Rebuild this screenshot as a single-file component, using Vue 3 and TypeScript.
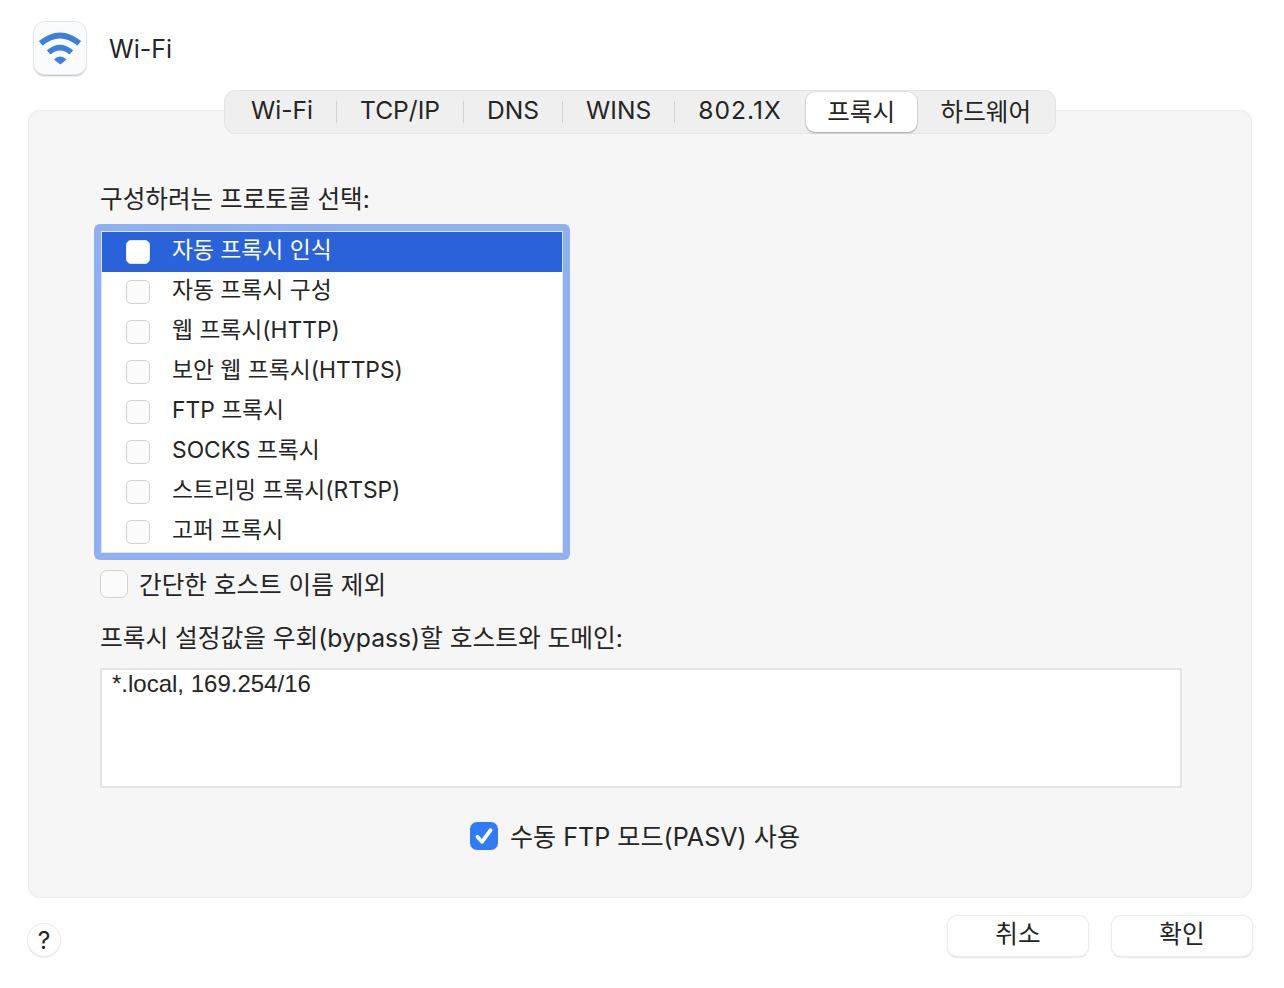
<script setup lang="ts">
const tabs = ['Wi-Fi', 'TCP/IP', 'DNS', 'WINS', '802.1X', '프록시', '하드웨어']
const activeTab = '프록시'

const protocols = [
  '자동 프록시 인식',
  '자동 프록시 구성',
  '웹 프록시(HTTP)',
  '보안 웹 프록시(HTTPS)',
  'FTP 프록시',
  'SOCKS 프록시',
  '스트리밍 프록시(RTSP)',
  '고퍼 프록시'
]
</script>

<template>
  <div class="window">
    <header class="title-row">
      <div class="app-icon">
        <svg width="52" height="52" viewBox="0 0 52 52">
          <path d="M6.8 21.4 Q26 5.6 45.2 21.4" class="arc" stroke-width="6" />
          <path d="M14.6 30.4 Q26 20.8 37.4 30.4" class="arc" stroke-width="5.6" />
          <path d="M20 37.6 Q26 31.6 32.6 37.6 L26.3 42.6 Z" fill="#3b7fe0" />
        </svg>
      </div>
      <h1 class="title">Wi-Fi</h1>
    </header>

    <nav class="tabs">
      <template v-for="(tab, i) in tabs" :key="tab">
        <span
          v-if="i > 0"
          class="sep"
          :class="{ hidden: tab === activeTab || tabs[i - 1] === activeTab }"
        ></span>
        <button class="tab" :class="{ active: tab === activeTab, numeric: tab === '802.1X' }">{{ tab }}</button>
      </template>
    </nav>

    <section class="panel">
      <p class="label">구성하려는 프로토콜 선택:</p>

      <div class="list-focus">
        <ul class="list">
          <li v-for="(item, i) in protocols" :key="item" class="row" :class="{ selected: i === 0 }">
            <span class="box small"></span>
            <span class="row-text">{{ item }}</span>
          </li>
        </ul>
      </div>

      <div class="exclude">
        <span class="box large"></span>
        <span class="exclude-text">간단한 호스트 이름 제외</span>
      </div>

      <p class="label bypass">프록시 설정값을 우회(bypass)할 호스트와 도메인:</p>
      <div class="hosts">*.local, 169.254/16</div>

      <div class="pasv">
        <span class="checked">
          <svg width="28" height="28" viewBox="0 0 28 28">
            <path d="M7.4 14.8 L12 19.8 L20.6 8.2" fill="none" stroke="#fff" stroke-width="3.8" stroke-linecap="round" stroke-linejoin="round" />
          </svg>
        </span>
        <span class="pasv-text">수동 FTP 모드(PASV) 사용</span>
      </div>
    </section>

    <footer class="footer">
      <button class="help">?</button>
      <div class="actions">
        <button class="btn">취소</button>
        <button class="btn">확인</button>
      </div>
    </footer>
  </div>
</template>

<style>
html, body {
  margin: 0;
  background: #fff;
}
</style>

<style scoped>
.window {
  width: 1284px;
  height: 988px;
  box-sizing: border-box;
  padding: 22px 32px 0 28px;
  font-family: Inter, "Noto Sans CJK KR", sans-serif;
  font-size: 24.6px;
  color: #252525;
  background: #fff;
  overflow: hidden;
}
.title-row {
  display: flex;
  align-items: center;
  height: 52px;
  padding-left: 6px;
  gap: 23px;
}
.app-icon {
  width: 52px;
  height: 52px;
  box-sizing: border-box;
  border-radius: 11px;
  background: #fafbfc;
  box-shadow: 0 0 0 1px #e6e6e6, 0 2px 2px rgba(0, 0, 0, 0.28);
}
.app-icon svg {
  display: block;
}
.arc {
  fill: none;
  stroke: #3b7fe0;
}
.title {
  margin: 2px 0 0;
  font-size: 25px;
  font-weight: 400;
}
.tabs {
  position: relative;
  z-index: 1;
  display: flex;
  align-items: center;
  width: 832px;
  height: 44px;
  box-sizing: border-box;
  margin: 16px 0 -24px 196px;
  padding: 0 26px;
  background: #efefef;
  border: 1px solid #e5e5e5;
  border-radius: 11px;
}
.tab {
  flex: none;
  height: 40px;
  padding: 0 23px 5px;
  border: none;
  border-radius: 9px;
  background: none;
  font: inherit;
  color: inherit;
}
.tabs .tab:first-of-type {
  padding-left: 0;
}
.tab.numeric {
  letter-spacing: 1px;
}
.tab.active {
  padding: 0 21.5px 5px;
  background: #fff;
  box-shadow: 0 0 0 0.5px rgba(0, 0, 0, 0.08), 0 1px 2px rgba(0, 0, 0, 0.3);
}
.sep {
  flex: none;
  width: 1px;
  height: 22px;
  background: #d4d4d4;
}
.sep.hidden {
  background: transparent;
}
.panel {
  width: 1224px;
  height: 788px;
  box-sizing: border-box;
  padding: 72px 69px 0 71px;
  background: #f6f6f6;
  border: 1px solid #ebebeb;
  border-radius: 12px;
}
.label {
  margin: 0;
  height: 32px;
  line-height: 32px;
}
.list-focus {
  width: 476px;
  box-sizing: border-box;
  margin: 9px 0 0 -6px;
  padding: 8px;
  background: #8fb0f2;
  border-radius: 6px;
}
.list {
  list-style: none;
  margin: 0;
  padding: 0;
  background: #fff;
  box-shadow: 0 0 0 1px #dfe5f2;
}
.row {
  display: flex;
  align-items: center;
  height: 40px;
  padding-left: 24px;
  gap: 22px;
  font-size: 22.8px;
}
.row.selected {
  background: #2a62d9;
  color: #fff;
}
.row-text {
  padding-bottom: 8px;
}
.box {
  flex: none;
  box-sizing: border-box;
  background: #fbfbfb;
  border: 1px solid #d2d2d2;
}
.box.small {
  width: 24px;
  height: 24px;
  border-radius: 5px;
}
.row.selected .box {
  background: #fff;
  border-color: #e4e8f0;
}
.box.large {
  width: 28px;
  height: 28px;
  border-radius: 7px;
}
.exclude {
  display: flex;
  align-items: center;
  gap: 11px;
  height: 28px;
  margin-top: 10px;
}
.exclude-text {
  padding-bottom: 2px;
}
.bypass {
  margin-top: 24px;
  font-size: 24.7px;
}
.hosts {
  height: 120px;
  box-sizing: border-box;
  margin-top: 14px;
  padding: 0 10px;
  line-height: 28px;
  font-size: 24px;
  font-family: "Liberation Sans", Arial, sans-serif;
  background: #fff;
  border: 2px solid #e4e4e4;
}
.pasv {
  display: flex;
  align-items: center;
  justify-content: center;
  gap: 12px;
  margin-top: 34px;
  padding-right: 12px;
  height: 28px;
  font-size: 25.1px;
}
.pasv-text {
  padding-bottom: 2px;
}
.checked {
  width: 28px;
  height: 28px;
  border-radius: 7px;
  background: #2f7cf6;
}
.checked svg {
  display: block;
}
.footer {
  display: flex;
  justify-content: space-between;
  align-items: flex-start;
  padding-top: 18px;
}
.help {
  width: 32px;
  height: 32px;
  margin-top: 8px;
  padding: 0;
  border: none;
  border-radius: 50%;
  background: #fff;
  font: inherit;
  color: inherit;
  box-shadow: 0 0 0 1px #ececec, 0 1px 2px rgba(0, 0, 0, 0.25);
}
.actions {
  display: flex;
  gap: 24px;
}
.btn {
  width: 140px;
  height: 40px;
  padding: 0 0 4px;
  border: none;
  border-radius: 9px;
  background: #fff;
  font: inherit;
  line-height: 24px;
  color: inherit;
  box-shadow: 0 0 0 1px #ececec, 0 1px 2px rgba(0, 0, 0, 0.3);
}
</style>
